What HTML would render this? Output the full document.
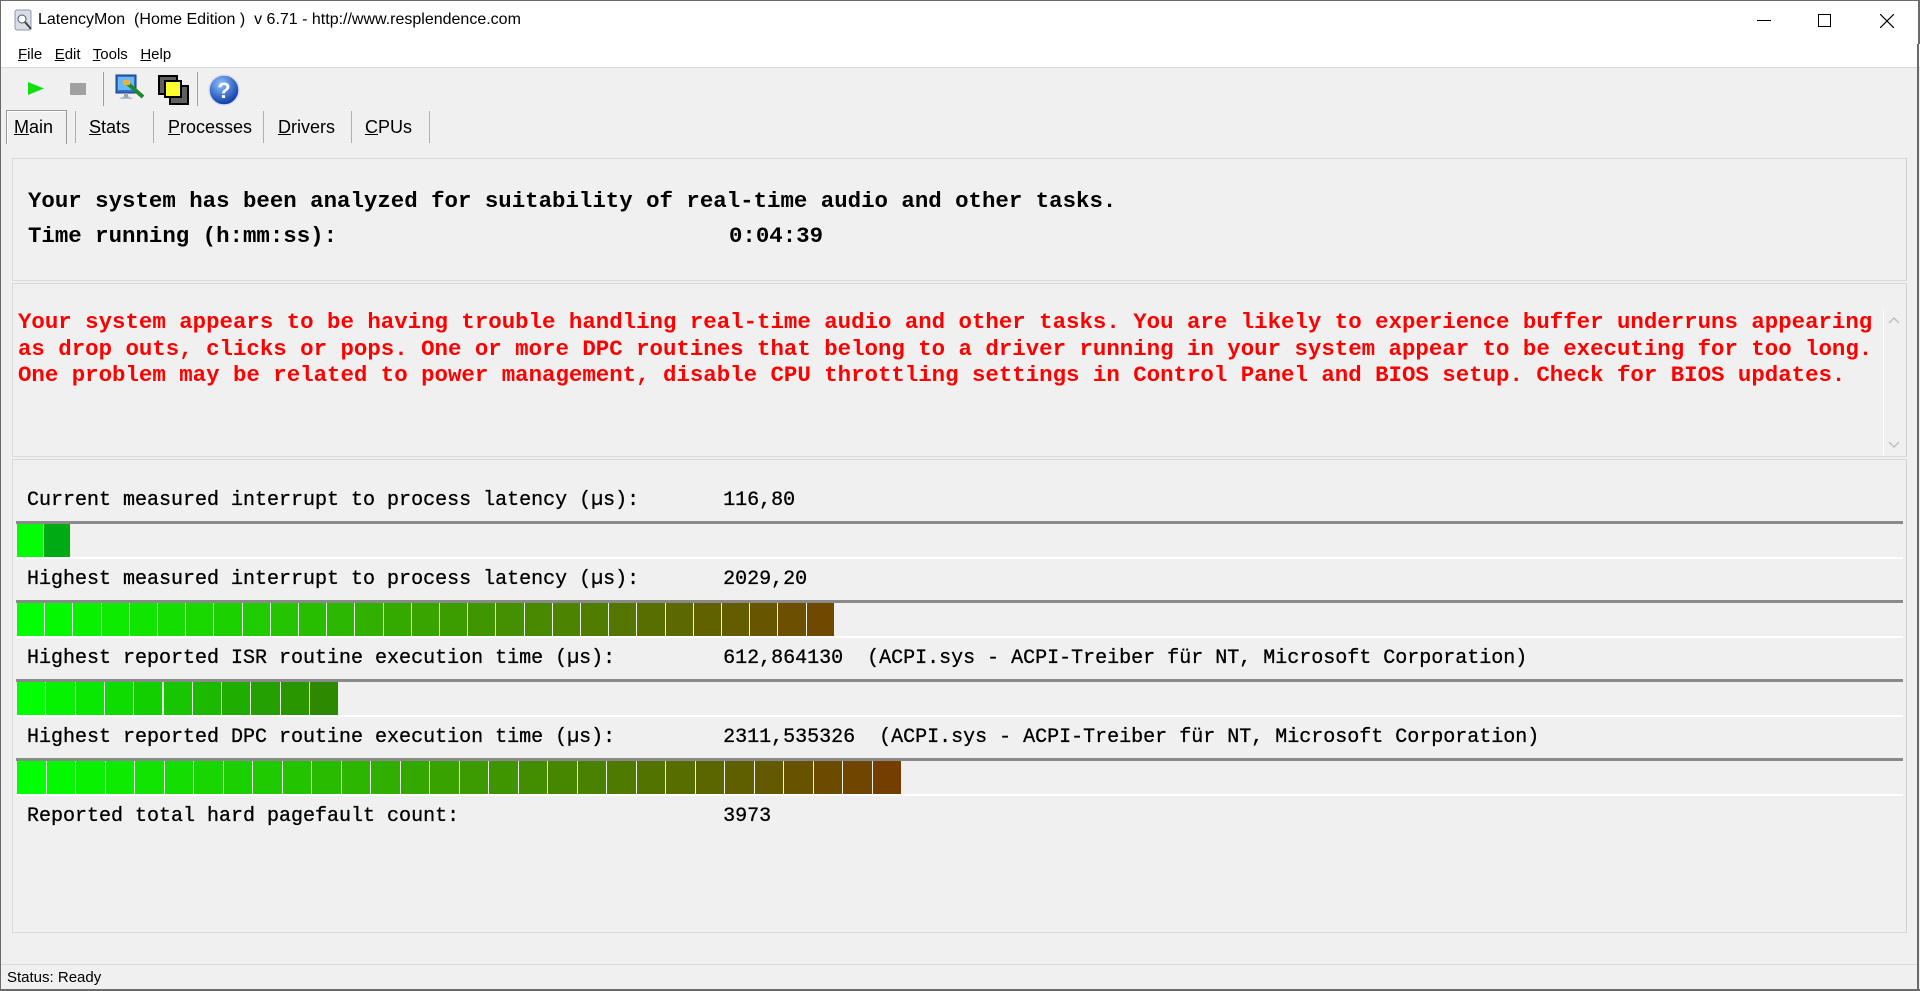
<!DOCTYPE html>
<html><head><meta charset="utf-8">
<style>
*{margin:0;padding:0;box-sizing:border-box}
body{width:1920px;height:991px;background:#f0f0f0;position:relative;overflow:hidden;font-family:"Liberation Sans",sans-serif}
.abs{position:absolute}
.ui{font-family:"Liberation Sans",sans-serif;color:#000}
.mono{font-family:"Liberation Mono","Courier New",monospace;color:#000;white-space:pre}
.panel{position:absolute;left:12px;width:1895px;border:1px solid #d9d9d9;border-right-color:#d0d0d0;background:#f0f0f0}
.bar{position:absolute;left:16px;width:1887px;height:38px;border-top:3px solid #8a8a8a;border-bottom:2px solid #fff;background:#f0f0f0}
.bar .seg{position:absolute;top:0;height:33px;border-right:1px solid #e8f0e8}
.lbl{position:absolute;left:27px;font-size:20px;line-height:22px;-webkit-text-stroke:0.3px #000}
u{text-decoration:underline}
</style></head><body>
<div class="abs" style="left:0;top:0;width:1920px;height:44px;background:#fff;border-left:1px solid #6a6a6a;border-right:2px solid #6a6a6a;border-top:1px solid #6a6a6a"></div>
<svg class="abs" style="left:13px;top:9px" width="22" height="24" viewBox="0 0 22 24"><rect x="2" y="1" width="16" height="20" rx="2" fill="#d8dde6" stroke="#8898b0"/><circle cx="9" cy="10" r="4" fill="#fff" stroke="#555"/><line x1="12" y1="13" x2="18" y2="20" stroke="#444" stroke-width="2"/></svg>
<div class="abs ui" style="left:38px;top:11px;font-size:16px">LatencyMon&nbsp; (Home Edition )&nbsp; v 6.71 - http://www.resplendence.com</div>
<div class="abs" style="left:1757px;top:20px;width:14px;height:1px;background:#000"></div>
<div class="abs" style="left:1818px;top:14px;width:13px;height:13px;border:1px solid #000"></div>
<svg class="abs" style="left:1880px;top:14px" width="14" height="14"><path d="M0 0L14 14M14 0L0 14" stroke="#000" stroke-width="1.2"/></svg>
<div class="abs" style="left:0;top:44px;width:1920px;height:24px;background:#fff;border-left:1px solid #6a6a6a;border-bottom:1px solid #d8d8d8"></div>
<div class="abs ui" style="left:18px;top:46px;font-size:15px"><u>F</u>ile&nbsp;&nbsp; <u>E</u>dit&nbsp;&nbsp; <u>T</u>ools&nbsp;&nbsp; <u>H</u>elp</div>
<div class="abs" style="left:0;top:44px;width:1px;height:947px;background:#6a6a6a"></div>
<div class="abs" style="left:1917px;top:44px;width:2px;height:947px;background:#6a6a6a"></div>
<svg class="abs" style="left:28px;top:82px" width="17" height="13"><path d="M0 0L16 6.5L0 13Z" fill="#10e010"/></svg>
<div class="abs" style="left:70px;top:83px;width:16px;height:12px;background:#a0a0a0"></div>
<div class="abs" style="left:103px;top:72px;width:1px;height:34px;background:#a0a0a0"></div>
<svg class="abs" style="left:113px;top:73px" width="33" height="32" viewBox="0 0 33 32"><rect x="3" y="2" width="20" height="18" fill="#2d6fd0" stroke="#1a3a80"/><rect x="5" y="4" width="16" height="13" fill="#6ab8f0"/><path d="M6 26Q13 20 20 26Z" fill="#b8c0d0"/><rect x="11" y="20" width="4" height="5" fill="#9aa4b8"/><path d="M13 9L30 24" stroke="#1e8a2e" stroke-width="4"/><rect x="10" y="7" width="7" height="5" fill="#f0b030"/></svg>
<svg class="abs" style="left:158px;top:75px" width="32" height="30"><rect x="1" y="1" width="18" height="18" fill="#606060" stroke="#000" stroke-width="2"/><rect x="12" y="11" width="18" height="18" fill="#606060" stroke="#000" stroke-width="2"/><rect x="7" y="6" width="16" height="16" fill="#ffff30" stroke="#000" stroke-width="2"/></svg>
<div class="abs" style="left:197px;top:72px;width:1px;height:34px;background:#a0a0a0"></div>
<svg class="abs" style="left:208px;top:74px" width="32" height="32"><defs><radialGradient id="g" cx="40%" cy="30%" r="70%"><stop offset="0" stop-color="#8cc0ff"/><stop offset="1" stop-color="#0a3aa8"/></radialGradient></defs><circle cx="16" cy="16" r="15" fill="url(#g)" stroke="#dde" stroke-width="1.5"/><text x="16" y="24" text-anchor="middle" font-family="Liberation Sans" font-weight="bold" font-size="22" fill="#fff">?</text></svg>
<div class="abs" style="left:6px;top:110px;width:61px;height:34px;border:1px solid #999;border-bottom:none;background:#f0f0f0;box-shadow:inset 1px 1px 0 #fff"></div>
<div class="abs ui" style="left:14px;top:117px;font-size:18px"><u>M</u>ain</div>
<div class="abs ui" style="left:89px;top:117px;font-size:18px"><u>S</u>tats</div>
<div class="abs ui" style="left:168px;top:117px;font-size:18px"><u>P</u>rocesses</div>
<div class="abs ui" style="left:278px;top:117px;font-size:18px"><u>D</u>rivers</div>
<div class="abs ui" style="left:365px;top:117px;font-size:18px"><u>C</u>PUs</div>
<div class="abs" style="left:75px;top:111px;width:1px;height:32px;background:#b0b0b0"></div>
<div class="abs" style="left:153px;top:111px;width:1px;height:32px;background:#b0b0b0"></div>
<div class="abs" style="left:263px;top:111px;width:1px;height:32px;background:#b0b0b0"></div>
<div class="abs" style="left:351px;top:111px;width:1px;height:32px;background:#b0b0b0"></div>
<div class="abs" style="left:429px;top:111px;width:1px;height:32px;background:#b0b0b0"></div>
<div class="panel" style="top:158px;height:123px"></div>
<div class="abs mono" style="left:28px;top:188px;font-size:22.4px;font-weight:bold">Your system has been analyzed for suitability of real-time audio and other tasks.</div>
<div class="abs mono" style="left:28px;top:223px;font-size:22.4px;font-weight:bold">Time running (h:mm:ss):</div>
<div class="abs mono" style="left:729px;top:223px;font-size:22.4px;font-weight:bold">0:04:39</div>
<div class="panel" style="top:283px;height:174px"></div>
<div class="abs" style="left:1883px;top:309px;width:21px;height:146px;background:#f0f0f0;border-left:1px solid #fff"></div>
<svg class="abs" style="left:1888px;top:316px" width="12" height="8"><path d="M1 7L6 2L11 7" fill="none" stroke="#c0c0c0" stroke-width="1.5"/></svg>
<svg class="abs" style="left:1888px;top:441px" width="12" height="8"><path d="M1 1L6 6L11 1" fill="none" stroke="#c0c0c0" stroke-width="1.5"/></svg>
<div class="abs mono" style="left:18px;top:309px;font-size:22.4px;font-weight:bold;color:#ff0000;line-height:26.7px">Your system appears to be having trouble handling real-time audio and other tasks. You are likely to experience buffer underruns appearing
as drop outs, clicks or pops. One or more DPC routines that belong to a driver running in your system appear to be executing for too long.
One problem may be related to power management, disable CPU throttling settings in Control Panel and BIOS setup. Check for BIOS updates.</div>
<div class="panel" style="top:459px;height:474px"></div>
<div class="lbl mono" style="top:490px">Current measured interrupt to process latency (µs):       116,80</div>
<div class="bar" style="top:521px" id="b1"></div>
<div class="lbl mono" style="top:569px">Highest measured interrupt to process latency (µs):       2029,20</div>
<div class="bar" style="top:600px" id="b2"></div>
<div class="lbl mono" style="top:648px">Highest reported ISR routine execution time (µs):         612,864130  (ACPI.sys - ACPI-Treiber für NT, Microsoft Corporation)</div>
<div class="bar" style="top:679px" id="b3"></div>
<div class="lbl mono" style="top:727px">Highest reported DPC routine execution time (µs):         2311,535326  (ACPI.sys - ACPI-Treiber für NT, Microsoft Corporation)</div>
<div class="bar" style="top:758px" id="b4"></div>
<div class="lbl mono" style="top:806px">Reported total hard pagefault count:                      3973</div>
<div class="abs" style="left:1px;top:964px;width:1916px;height:1px;background:#d8d8d8"></div>
<div class="abs ui" style="left:7px;top:969px;font-size:15px">Status: Ready</div>
<div class="abs" style="left:0;top:989px;width:1920px;height:2px;background:#6a6a6a"></div>
<script>
function fill(id,n,w,end){var b=document.getElementById(id),h='';for(var i=0;i<n;i++){var t=n>1?i/(n-1):0;var r=Math.round(end[0]*t),g=Math.round(255+(end[1]-255)*t),bl=Math.round(end[2]*t);h+='<div class="seg" style="left:'+(1+i*w).toFixed(1)+'px;width:'+w.toFixed(1)+'px;background:rgb('+r+','+g+','+bl+')"></div>';}b.innerHTML=h;}
fill('b1',2,27,[0,170,20]);
fill('b2',29,28.2,[112,72,0]);
fill('b3',11,29.3,[45,138,0]);
fill('b4',30,29.5,[115,62,0]);
</script>
</body></html>
